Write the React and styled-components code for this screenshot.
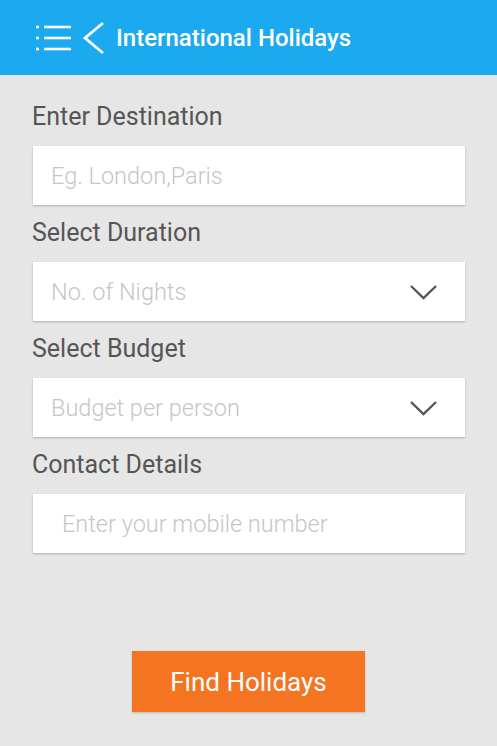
import styled, { createGlobalStyle } from "styled-components";

const GlobalStyle = createGlobalStyle`
  body {
    margin: 0;
    background-color: #e6e6e6;
    font-family: Roboto, "Liberation Sans", sans-serif;
  }
`;

const fields = [
  { label: "Enter Destination", placeholder: "Eg. London,Paris" },
  { label: "Select Duration", placeholder: "No. of Nights", select: true },
  { label: "Select Budget", placeholder: "Budget per person", select: true },
  { label: "Contact Details", placeholder: "Enter your mobile number", indent: true },
];

function MenuIcon() {
  return (
    <svg width="36" height="28" viewBox="0 0 36 28" fill="none" stroke="#fff" strokeWidth="2.6">
      <line x1="0" y1="3" x2="3" y2="3" />
      <line x1="0" y1="14" x2="3" y2="14" />
      <line x1="0" y1="25" x2="3" y2="25" />
      <line x1="8" y1="3" x2="35" y2="3" />
      <line x1="8" y1="14" x2="35" y2="14" />
      <line x1="8" y1="25" x2="35" y2="25" />
    </svg>
  );
}

function BackIcon() {
  return (
    <svg width="24" height="34" viewBox="0 0 24 34" fill="none" stroke="#fff" strokeWidth="2.8">
      <polyline points="21,2 3,17 21,32" />
    </svg>
  );
}

function Chevron() {
  return (
    <svg width="27" height="16" viewBox="0 0 27 16" fill="none" stroke="#555" strokeWidth="2.4">
      <polyline points="1,2 13.5,14 26,2" />
    </svg>
  );
}

export default function App() {
  return (
    <Page>
      <GlobalStyle />
      <Header>
        <MenuIcon />
        <BackIcon />
        <Title>International Holidays</Title>
      </Header>
      <Form>
        {fields.map((f) => (
          <Group key={f.label}>
            <Label>{f.label}</Label>
            <Box>
              <Placeholder $indent={f.indent}>{f.placeholder}</Placeholder>
              {f.select && <Chevron />}
            </Box>
          </Group>
        ))}
      </Form>
      <ButtonRow>
        <FindButton>Find Holidays</FindButton>
      </ButtonRow>
    </Page>
  );
}

const Page = styled.div`
  width: 497px;
  height: 746px;
  background-color: #e6e6e6;
`;

const Header = styled.header`
  height: 75px;
  background-color: #1ba9ef;
  display: flex;
  align-items: center;
  padding: 0 0 0 36px;
  gap: 10px;
  box-sizing: border-box;
`;

const Title = styled.h1`
  margin: 0;
  color: #ffffff;
  font-size: 24px;
  font-weight: 500;
`;

const Form = styled.div`
  display: flex;
  flex-direction: column;
  padding: 25px 32px 0 32px;
  gap: 11px;
`;

const Group = styled.div`
  display: flex;
  flex-direction: column;
`;

const Label = styled.div`
  font-size: 25px;
  color: #555555;
  height: 34px;
  line-height: 34px;
  margin-bottom: 12px;
`;

const Box = styled.div`
  height: 59px;
  margin-left: 1px;
  background-color: #ffffff;
  box-shadow: 0 1px 2px rgba(0, 0, 0, 0.25);
  display: flex;
  align-items: center;
  justify-content: space-between;
  padding: 0 28px 0 18px;
  box-sizing: border-box;
`;

const Placeholder = styled.span`
  font-size: 23.5px;
  color: #c6c6c6;
  font-weight: 300;
  padding-left: ${(p) => (p.$indent ? "11px" : "0")};
`;

const ButtonRow = styled.div`
  display: flex;
  justify-content: center;
  padding-top: 98px;
`;

const FindButton = styled.button`
  width: 233px;
  height: 61px;
  border: 0;
  background-color: #f47421;
  color: #ffffff;
  font-family: Roboto, "Liberation Sans", sans-serif;
  font-size: 26px;
  font-weight: 400;
  box-shadow: 0 1px 2px rgba(0, 0, 0, 0.2);
  cursor: pointer;
`;
